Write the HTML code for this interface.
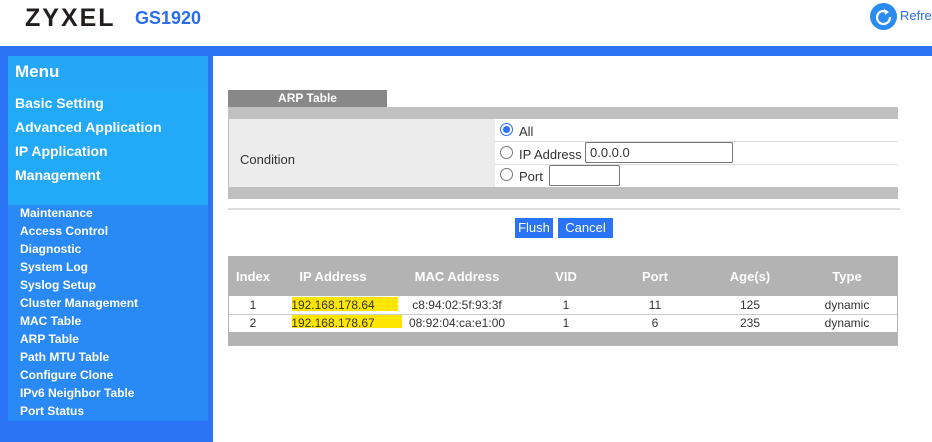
<!DOCTYPE html>
<html><head><style>
*{margin:0;padding:0;box-sizing:border-box}
body{width:932px;height:442px;overflow:hidden;background:#fff;font-family:"Liberation Sans",sans-serif;position:relative}
.a{position:absolute}
.sb{font-weight:bold;color:#fff;font-size:14px}
.sm{font-weight:bold;color:#fff;font-size:12px;position:absolute;left:20px}
td{text-align:center;font-size:12px;color:#333}
</style></head><body>
<div class="a" style="left:25px;top:4px;font-size:25px;font-weight:bold;color:#231f1f;letter-spacing:2px">ZYXEL</div>
<div class="a" style="left:135px;top:8px;font-size:18px;font-weight:bold;color:#2a6cf0">GS1920</div>
<div class="a" style="left:870px;top:3px;width:27px;height:27px;border-radius:50%;background:#2a8cf0"></div>
<svg class="a" style="left:870px;top:3px" width="27" height="27"><path d="M17 9 A6.5 6.5 0 1 0 20 14" fill="none" stroke="#fff" stroke-width="2.2"/><path d="M14 6 L19 9 L15 12 Z" fill="#fff"/></svg>
<div class="a" style="left:900px;top:8px;font-size:13px;color:#2a6cf0">Refre</div>
<div class="a" style="left:0;top:46px;width:932px;height:10px;background:#2a73f5"></div>
<div class="a" style="left:0;top:46px;width:213px;height:396px;background:#2a73f5"></div>
<div class="a" style="left:8px;top:56px;width:200px;height:149px;background:#22aaf8"></div>
<div class="a" style="left:8px;top:56px;width:200px;height:34px;background:#25a6f7"></div>
<div class="a" style="left:8px;top:205px;width:200px;height:216px;background:#2a8af5"></div>
<div class="a sb" style="left:15px;top:62px;font-size:17px">Menu</div>
<div class="a sb" style="left:15px;top:95px">Basic Setting</div>
<div class="a sb" style="left:15px;top:119px">Advanced Application</div>
<div class="a sb" style="left:15px;top:143px">IP Application</div>
<div class="a sb" style="left:15px;top:167px">Management</div>
<div class="sm" style="top:206px">Maintenance</div>
<div class="sm" style="top:224px">Access Control</div>
<div class="sm" style="top:242px">Diagnostic</div>
<div class="sm" style="top:260px">System Log</div>
<div class="sm" style="top:278px">Syslog Setup</div>
<div class="sm" style="top:296px">Cluster Management</div>
<div class="sm" style="top:314px">MAC Table</div>
<div class="sm" style="top:332px">ARP Table</div>
<div class="sm" style="top:350px">Path MTU Table</div>
<div class="sm" style="top:368px">Configure Clone</div>
<div class="sm" style="top:386px">IPv6 Neighbor Table</div>
<div class="sm" style="top:404px">Port Status</div>

<div class="a" style="left:228px;top:90px;width:159px;height:17px;background:#888;color:#fff;font-weight:bold;font-size:12px;text-align:center;line-height:17px">ARP Table</div>
<div class="a" style="left:228px;top:107px;width:670px;height:92px;background:#c0c0c0"></div>
<div class="a" style="left:229px;top:119px;width:266px;height:68px;background:#ececec"></div>
<div class="a" style="left:495px;top:119px;width:403px;height:68px;background:#fff"></div>
<div class="a" style="left:495px;top:141px;width:403px;height:1px;background:#ddd"></div>
<div class="a" style="left:495px;top:164px;width:403px;height:1px;background:#ddd"></div>
<div class="a" style="left:240px;top:152px;font-size:13px;color:#333">Condition</div>
<div class="a" style="left:500px;top:123px;width:13px;height:13px;border-radius:50%;border:1px solid #2a73f5;background:#fff"></div>
<div class="a" style="left:503px;top:126px;width:7px;height:7px;border-radius:50%;background:#2a73f5"></div>
<div class="a" style="left:519px;top:124px;font-size:13px;color:#333">All</div>
<div class="a" style="left:500px;top:146px;width:13px;height:13px;border-radius:50%;border:1px solid #777"></div>
<div class="a" style="left:519px;top:147px;font-size:13px;color:#333">IP Address</div>
<div class="a" style="left:585px;top:142px;width:148px;height:21px;border:1px solid #777;border-radius:2px;font-size:13px;padding:2px 4px;color:#333">0.0.0.0</div>
<div class="a" style="left:500px;top:168px;width:13px;height:13px;border-radius:50%;border:1px solid #777"></div>
<div class="a" style="left:519px;top:169px;font-size:13px;color:#333">Port</div>
<div class="a" style="left:549px;top:165px;width:71px;height:21px;border:1px solid #777;border-radius:2px"></div>
<div class="a" style="left:228px;top:208px;width:672px;height:2px;background:#ddd"></div>
<div class="a" style="left:515px;top:218px;width:38px;height:20px;background:#2a73f5;color:#fff;font-size:13px;text-align:center;line-height:20px">Flush</div>
<div class="a" style="left:558px;top:218px;width:55px;height:20px;background:#2a73f5;color:#fff;font-size:13px;text-align:center;line-height:20px">Cancel</div>

<div class="a" style="left:228px;top:256px;width:670px;height:90px;background:#b3b3b3"></div>
<div class="a" style="left:229px;top:296px;width:668px;height:36px;background:#fff"></div>
<div class="a" style="left:229px;top:314px;width:668px;height:1px;background:#ccc"></div>
<div class="a" style="left:292px;top:297px;width:106px;height:14px;background:#ffe600"></div>
<div class="a" style="left:292px;top:315px;width:110px;height:13px;background:#ffe600"></div>
<table class="a" style="left:228px;top:256px;width:670px;border-collapse:collapse">
<tr style="height:40px"><td style="width:50px;color:#fff;font-weight:bold;font-size:13px">Index</td><td style="width:110px;color:#fff;font-weight:bold;font-size:13px">IP Address</td><td style="width:138px;color:#fff;font-weight:bold;font-size:13px">MAC Address</td><td style="width:80px;color:#fff;font-weight:bold;font-size:13px">VID</td><td style="width:98px;color:#fff;font-weight:bold;font-size:13px">Port</td><td style="width:92px;color:#fff;font-weight:bold;font-size:13px">Age(s)</td><td style="color:#fff;font-weight:bold;font-size:13px">Type</td></tr>
<tr style="height:18px"><td>1</td><td>192.168.178.64</td><td>c8:94:02:5f:93:3f</td><td>1</td><td>11</td><td>125</td><td>dynamic</td></tr>
<tr style="height:18px"><td>2</td><td>192.168.178.67</td><td>08:92:04:ca:e1:00</td><td>1</td><td>6</td><td>235</td><td>dynamic</td></tr>
</table>
</body></html>
